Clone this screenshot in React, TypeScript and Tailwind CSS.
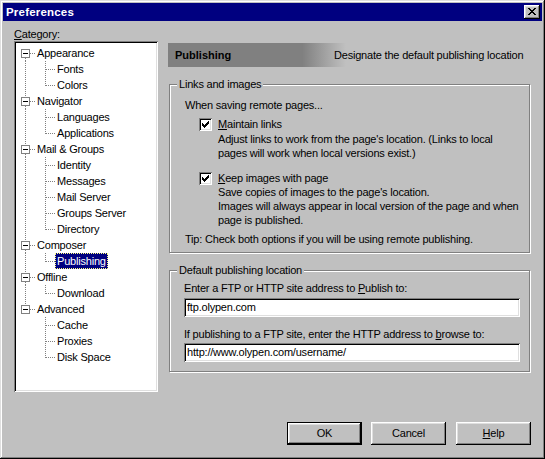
import type { ReactNode } from 'react';

const raised =
  'shadow-[inset_-1px_-1px_0_#000,inset_1px_1px_0_#fff,inset_-2px_-2px_0_#808080,inset_2px_2px_0_#dfdfdf]';
const sunken =
  'shadow-[inset_1px_1px_0_#808080,inset_-1px_-1px_0_#fff,inset_2px_2px_0_#000,inset_-2px_-2px_0_#dfdfdf]';

interface Branch {
  label: string;
  children: string[];
}

const categories: Branch[] = [
  { label: 'Appearance', children: ['Fonts', 'Colors'] },
  { label: 'Navigator', children: ['Languages', 'Applications'] },
  { label: 'Mail & Groups', children: ['Identity', 'Messages', 'Mail Server', 'Groups Server', 'Directory'] },
  { label: 'Composer', children: ['Publishing'] },
  { label: 'Offline', children: ['Download'] },
  { label: 'Advanced', children: ['Cache', 'Proxies', 'Disk Space'] },
];

// pixel bitmaps for the little glyphs
const CHECK = ['......#', '.....##', '#...###', '##.###.', '#####..', '.###...', '..#....'];
const CLOSE_X = ['##....##', '.##..##.', '..####..', '...##...', '..####..', '.##..##.', '##....##'];

const Bitmap = ({ rows, className }: { rows: string[]; className?: string }) => (
  <svg width={rows[0].length} height={rows.length} className={className} shapeRendering="crispEdges">
    {rows.flatMap((r, y) =>
      r.split('').map((c, x) => (c === '#' ? <rect key={`${x}-${y}`} x={x} y={y} width={1} height={1} fill="#000" /> : null))
    )}
  </svg>
);

const Dots = (props: { x1: number; y1: number; x2: number; y2: number }) => (
  <line {...props} stroke="#808080" strokeDasharray="1 1" />
);

const RootLines = ({ first, last }: { first: boolean; last: boolean }) => (
  <svg width={19} height={16} shapeRendering="crispEdges" className="shrink-0">
    {!first && <Dots x1={9.5} y1={0} x2={9.5} y2={4} />}
    {!last && <Dots x1={9.5} y1={13} x2={9.5} y2={16} />}
    <rect x={5.5} y={4.5} width={8} height={8} fill="#fff" stroke="#808080" />
    <line x1={7} y1={8.5} x2={12} y2={8.5} stroke="#000" />
    <Dots x1={14} y1={8.5} x2={19} y2={8.5} />
  </svg>
);

const ChildLines = ({ rootLast, last }: { rootLast: boolean; last: boolean }) => (
  <svg width={39} height={16} shapeRendering="crispEdges" className="shrink-0">
    {!rootLast && <Dots x1={9.5} y1={0} x2={9.5} y2={16} />}
    <Dots x1={29.5} y1={0} x2={29.5} y2={last ? 9 : 16} />
    <Dots x1={30} y1={8.5} x2={39} y2={8.5} />
  </svg>
);

const CategoryTree = () => (
  <div className={`w-[144px] h-[351px] bg-white p-[2px] ${sunken}`}>
    <div className="pt-[2px]">
      {categories.map((b, i) => {
        const rootLast = i === categories.length - 1;
        return (
          <div key={b.label}>
            <div className="flex h-[16px] items-center">
              <RootLines first={i === 0} last={rootLast} />
              <span className="px-[2px] leading-[16px] whitespace-nowrap">{b.label}</span>
            </div>
            {b.children.map((c, j) => {
              const selected = c === 'Publishing';
              return (
                <div key={c} className="flex h-[16px] items-center">
                  <ChildLines rootLast={rootLast} last={j === b.children.length - 1} />
                  <span
                    className={
                      selected
                        ? 'px-[1px] h-[16px] leading-[14px] whitespace-nowrap bg-[#000080] text-white border border-dotted border-[#ffff80]'
                        : 'px-[2px] leading-[16px] whitespace-nowrap'
                    }
                  >
                    {c}
                  </span>
                </div>
              );
            })}
          </div>
        );
      })}
    </div>
  </div>
);

const GroupBox = ({ title, className, children }: { title: string; className: string; children: ReactNode }) => (
  <div
    className={`relative ml-[1px] w-[361px] border border-[#808080] shadow-[inset_1px_1px_0_#fff,1px_1px_0_#fff] ${className}`}
  >
    <span className="absolute -top-[7px] left-[7px] bg-[#c0c0c0] px-[2px] leading-[13px]">{title}</span>
    {children}
  </div>
);

const CheckBox = ({ children }: { children: ReactNode }) => (
  <div className="flex h-[13px] items-center gap-[6px] pl-[14px]">
    <div className={`flex h-[13px] w-[13px] items-center justify-center bg-white ${sunken}`}>
      <Bitmap rows={CHECK} />
    </div>
    <span className="leading-[13px]">{children}</span>
  </div>
);

const TextField = ({ value, className }: { value: string; className: string }) => (
  <div className={`h-[19px] w-[336px] bg-white px-[3px] leading-[19px] ${sunken} ${className}`}>{value}</div>
);

const Button = ({ children, primary, className }: { children: ReactNode; primary?: boolean; className?: string }) => (
  <div className={`h-[23px] w-[75px] ${primary ? 'border border-black' : ''} ${className ?? ''}`}>
    <div className={`flex h-full w-full items-center justify-center bg-[#c0c0c0] ${raised}`}>{children}</div>
  </div>
);

export default function App() {
  return (
    <div
      className={`flex h-[459px] w-[545px] flex-col whitespace-nowrap bg-[#c0c0c0] p-[3px] text-[11px] tracking-[-0.2px] text-black font-['Liberation_Sans',Arial,sans-serif] shadow-[inset_-1px_-1px_0_#000,inset_1px_1px_0_#dfdfdf,inset_-2px_-2px_0_#808080,inset_2px_2px_0_#fff]`}
    >
      {/* title bar */}
      <div className="flex h-[18px] shrink-0 items-center justify-between bg-[#000080] pl-[3px] pr-[2px]">
        <span className="text-[11.5px] font-bold tracking-[0.2px] text-white leading-[18px]">Preferences</span>
        <div className={`flex h-[14px] w-[16px] items-center justify-center bg-[#c0c0c0] ${raised}`}>
          <Bitmap rows={CLOSE_X} className="-mt-[1px]" />
        </div>
      </div>

      <div className="flex">
        {/* category list */}
        <div className="w-[165px] shrink-0 pl-[11px] pt-[7px]">
          <div className="h-[13px] leading-[13px]">
            <span className="underline">C</span>ategory:
          </div>
          <CategoryTree />
        </div>

        {/* page for the selected category */}
        <div className="w-[363px] pt-[22px]">
          <div className="flex h-[24px] items-center bg-[linear-gradient(to_right,#808080_37%,#c0c0c0_49%)] pl-[7px]">
            <span className="w-[159px] font-bold tracking-normal">Publishing</span>
            <span>Designate the default publishing location</span>
          </div>

          <GroupBox title="Links and images" className="mt-[17px] h-[169px]">
            <div className="pl-[15px] pt-[14px]">
              <div className="leading-[13px]">When saving remote pages...</div>
              <div className="mt-[6px]">
                <CheckBox>
                  <span className="underline">M</span>aintain links
                </CheckBox>
              </div>
              <div className="mt-[1px] pl-[33px] leading-[14px]">
                Adjust links to work from the page's location. (Links to local
                <br />
                pages will work when local versions exist.)
              </div>
              <div className="mt-[12px]">
                <CheckBox>
                  <span className="underline">K</span>eep images with page
                </CheckBox>
              </div>
              <div className="pl-[33px] leading-[14px]">
                Save copies of images to the page's location.
                <br />
                Images will always appear in local version of the page and when
                <br />
                page is published.
              </div>
              <div className="mt-[6px] leading-[13px]">Tip: Check both options if you will be using remote publishing.</div>
            </div>
          </GroupBox>

          <GroupBox title="Default publishing location" className="mt-[17px] h-[102px]">
            <div className="pl-[14px] pt-[11px]">
              <div className="leading-[13px]">
                Enter a FTP or HTTP site address to <span className="underline">P</span>ublish to:
              </div>
              <TextField value="ftp.olypen.com" className="mt-[3px]" />
              <div className="mt-[11px] leading-[13px]">
                If publishing to a FTP site, enter the HTTP address to <span className="underline">b</span>rowse to:
              </div>
              <TextField value="http://www.olypen.com/username/" className="mt-[2px]" />
            </div>
          </GroupBox>
        </div>
      </div>

      {/* dialog buttons */}
      <div className="mt-[30px] flex justify-end pr-[11px]">
        <Button primary>OK</Button>
        <Button className="ml-[9px]">Cancel</Button>
        <Button className="ml-[10px]">
          <span>
            <span className="underline">H</span>elp
          </span>
        </Button>
      </div>
    </div>
  );
}
